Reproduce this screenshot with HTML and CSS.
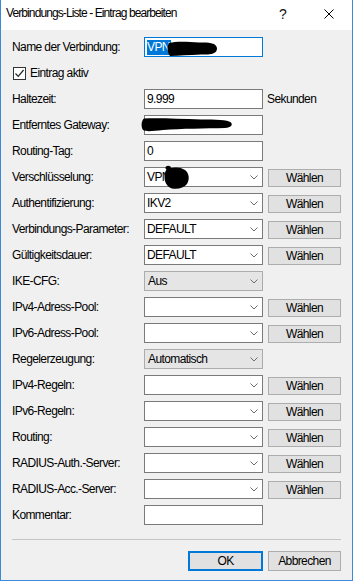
FILE: index.html
```html
<!DOCTYPE html>
<html lang="de">
<head>
<meta charset="utf-8">
<title>Verbindungs-Liste - Eintrag bearbeiten</title>
<link rel="stylesheet" href="styles.css">
</head>
<body>
<div class="window">
  <div class="titlebar">
    <span class="title">Verbindungs-Liste - Eintrag bearbeiten</span>
    <div class="caption">
      <span class="cap-btn help">?</span>
      <span class="cap-btn close"><svg width="10" height="10" viewBox="0 0 10 10"><path d="M0.5 0.5 L9.5 9.5 M9.5 0.5 L0.5 9.5" stroke="#000" stroke-width="1" fill="none"/></svg></span>
    </div>
  </div>
  <div class="content">
    <div class="form">
      <span class="label">Name der Verbindung:</span>
      <div class="field edit focused"><span class="sel">VPN</span>
        <svg class="redact r1" width="52" height="17" viewBox="0 0 52 17"><path d="M2 3 C10 1 22 2 32 2.5 C42 2 50 3 50 8.5 C50 14 43 15 34 14.5 C22 15 12 15.5 3 16 C0 12 0 6 2 3 Z" fill="#000"/></svg>
      </div>
      <span></span>

      <label class="check-row"><span class="checkbox"><svg width="11" height="11" viewBox="0 0 11 11"><path d="M1.5 5.5 L4.2 8.3 L9.6 2" stroke="#222" stroke-width="1.2" fill="none"/></svg></span><span>Eintrag aktiv</span></label>

      <span class="label">Haltezeit:</span>
      <div class="field edit">9.999</div>
      <span class="unit">Sekunden</span>

      <span class="label">Entferntes Gateway:</span>
      <div class="field edit">
        <svg class="redact r2" width="92" height="17" viewBox="0 0 92 17"><path d="M3 2.5 C20 2 40 3 60 3.5 C75 3.5 86 3.5 90 6.5 C92 9 90 11.5 84 12 C65 12.5 40 12.5 22 14 C12 15 5 16 2 14 C0 11 0 5 3 2.5 Z" fill="#000"/></svg>
      </div>
      <span></span>

      <span class="label">Routing-Tag:</span>
      <div class="field edit">0</div>
      <span></span>

      <span class="label">Verschlüsselung:</span>
      <div class="field combo"><span>VPN</span><svg class="chev" width="8" height="5" viewBox="0 0 8 5"><path d="M0.5 0.5 L4 4 L7.5 0.5" stroke="#6d6d6d" fill="none"/></svg>
        <svg class="redact r3" width="27" height="25" viewBox="0 0 27 25"><path d="M3 1.5 C5 0 8 1 8 3 C12 2 18 2 22 5 C26 8 27 14 24 19 C21 23 15 24.5 9 23.5 C4 22 1.5 17 1.5 12 C1.5 8 2.5 6 3.5 4.5 C2.5 4 2 2.5 3 1.5 Z" fill="#000"/></svg>
      </div>
      <button class="btn">Wählen</button>

      <span class="label">Authentifizierung:</span>
      <div class="field combo"><span>IKV2</span><svg class="chev" width="8" height="5" viewBox="0 0 8 5"><path d="M0.5 0.5 L4 4 L7.5 0.5" stroke="#6d6d6d" fill="none"/></svg></div>
      <button class="btn">Wählen</button>

      <span class="label">Verbindungs-Parameter:</span>
      <div class="field combo"><span>DEFAULT</span><svg class="chev" width="8" height="5" viewBox="0 0 8 5"><path d="M0.5 0.5 L4 4 L7.5 0.5" stroke="#6d6d6d" fill="none"/></svg></div>
      <button class="btn">Wählen</button>

      <span class="label">Gültigkeitsdauer:</span>
      <div class="field combo"><span>DEFAULT</span><svg class="chev" width="8" height="5" viewBox="0 0 8 5"><path d="M0.5 0.5 L4 4 L7.5 0.5" stroke="#6d6d6d" fill="none"/></svg></div>
      <button class="btn">Wählen</button>

      <span class="label">IKE-CFG:</span>
      <div class="field combo list"><span>Aus</span><svg class="chev" width="8" height="5" viewBox="0 0 8 5"><path d="M0.5 0.5 L4 4 L7.5 0.5" stroke="#6d6d6d" fill="none"/></svg></div>
      <span></span>

      <span class="label">IPv4-Adress-Pool:</span>
      <div class="field combo"><span></span><svg class="chev" width="8" height="5" viewBox="0 0 8 5"><path d="M0.5 0.5 L4 4 L7.5 0.5" stroke="#6d6d6d" fill="none"/></svg></div>
      <button class="btn">Wählen</button>

      <span class="label">IPv6-Adress-Pool:</span>
      <div class="field combo"><span></span><svg class="chev" width="8" height="5" viewBox="0 0 8 5"><path d="M0.5 0.5 L4 4 L7.5 0.5" stroke="#6d6d6d" fill="none"/></svg></div>
      <button class="btn">Wählen</button>

      <span class="label">Regelerzeugung:</span>
      <div class="field combo list"><span>Automatisch</span><svg class="chev" width="8" height="5" viewBox="0 0 8 5"><path d="M0.5 0.5 L4 4 L7.5 0.5" stroke="#6d6d6d" fill="none"/></svg></div>
      <span></span>

      <span class="label">IPv4-Regeln:</span>
      <div class="field combo"><span></span><svg class="chev" width="8" height="5" viewBox="0 0 8 5"><path d="M0.5 0.5 L4 4 L7.5 0.5" stroke="#6d6d6d" fill="none"/></svg></div>
      <button class="btn">Wählen</button>

      <span class="label">IPv6-Regeln:</span>
      <div class="field combo"><span></span><svg class="chev" width="8" height="5" viewBox="0 0 8 5"><path d="M0.5 0.5 L4 4 L7.5 0.5" stroke="#6d6d6d" fill="none"/></svg></div>
      <button class="btn">Wählen</button>

      <span class="label">Routing:</span>
      <div class="field combo"><span></span><svg class="chev" width="8" height="5" viewBox="0 0 8 5"><path d="M0.5 0.5 L4 4 L7.5 0.5" stroke="#6d6d6d" fill="none"/></svg></div>
      <button class="btn">Wählen</button>

      <span class="label">RADIUS-Auth.-Server:</span>
      <div class="field combo"><span></span><svg class="chev" width="8" height="5" viewBox="0 0 8 5"><path d="M0.5 0.5 L4 4 L7.5 0.5" stroke="#6d6d6d" fill="none"/></svg></div>
      <button class="btn">Wählen</button>

      <span class="label">RADIUS-Acc.-Server:</span>
      <div class="field combo"><span></span><svg class="chev" width="8" height="5" viewBox="0 0 8 5"><path d="M0.5 0.5 L4 4 L7.5 0.5" stroke="#6d6d6d" fill="none"/></svg></div>
      <button class="btn">Wählen</button>

      <span class="label">Kommentar:</span>
      <div class="field edit"></div>
      <span></span>
    </div>
    <div class="sep"></div>
    <div class="actions">
      <button class="btn btn-ok">OK</button>
      <button class="btn btn-cancel">Abbrechen</button>
    </div>
  </div>
</div>
</body>
</html>
```
FILE: styles.css
```css
* { box-sizing: border-box; }
html, body { margin: 0; padding: 0; }
body {
  width: 353px;
  height: 581px;
  font-family: "Liberation Sans", Arial, sans-serif;
  font-size: 12px;
  letter-spacing: -0.6px;
  color: #000;
  background: #f0f0f0;
}
.window {
  width: 353px;
  height: 581px;
  border: 1px solid #3b8ad9;
  border-top: none;
  display: flex;
  flex-direction: column;
  background: #f0f0f0;
}
.titlebar {
  height: 30px;
  background: #fff;
  display: flex;
  align-items: flex-start;
  justify-content: space-between;
}
.title {
  padding-left: 5px;
  line-height: 27px;
  font-size: 12px;
  letter-spacing: -0.9px;
}
.caption { display: flex; }
.cap-btn {
  width: 46px;
  height: 27px;
  display: flex;
  align-items: center;
  justify-content: center;
}
.help { font-size: 14px; letter-spacing: 0; padding-top: 1px; color: #111; }
.close svg { display: block; margin-top: 1px; }
.content {
  flex: 1;
  padding: 7px 11px 0 11px;
  display: flex;
  flex-direction: column;
}
.form {
  display: grid;
  grid-template-columns: 127px 119px 73px;
  grid-auto-rows: 20px;
  column-gap: 5px;
  row-gap: 6px;
  align-items: center;
}
.label { white-space: nowrap; }
.field {
  position: relative;
  height: 20px;
  background: #fff;
  border: 1px solid #7a7a7a;
  padding-left: 2px;
  display: flex;
  align-items: center;
  white-space: nowrap;
}
.field.focused { border-color: #0078d7; }
.sel {
  background: #0078d7;
  color: #fff;
  line-height: 15px;
  padding-right: 1px;
}
.combo { justify-content: space-between; padding-right: 4px; }
.combo.list {
  background: #e5e5e5;
  border-color: #acacac;
  padding-left: 3px;
}
.chev { display: block; margin-top: 1px; }
.check-row {
  grid-column: 1 / span 3;
  display: flex;
  align-items: center;
  gap: 4px;
  padding-left: 1px;
}
.checkbox {
  width: 13px;
  height: 13px;
  border: 1px solid #333;
  background: #fff;
  display: flex;
  align-items: center;
  justify-content: center;
}
.checkbox svg { display: block; }
.unit { margin-left: -1px; }
.btn {
  font-family: inherit;
  font-size: 12px;
  letter-spacing: -0.6px;
  color: #000;
  background: #e1e1e1;
  border: 1px solid #adadad;
  height: 18px;
  padding: 0;
  margin-top: 1px;
  align-self: center;
}
.redact { position: absolute; display: block; }
.r1 { left: 22px; top: 2px; }
.r2 { left: -4px; top: 0px; }
.r3 { left: 18px; top: -3px; }
.sep {
  margin-top: 14px;
  height: 1px;
  width: 329px;
  background: #c4c4c4;
}
.actions {
  margin-top: 11px;
  display: flex;
  justify-content: flex-end;
  gap: 5px;
  width: 329px;
}
.btn-ok {
  width: 75px;
  height: 20px;
  margin-top: 0;
  border: 2px solid #0078d7;
}
.btn-cancel {
  width: 73px;
  height: 20px;
  margin-top: 0;
}
```
